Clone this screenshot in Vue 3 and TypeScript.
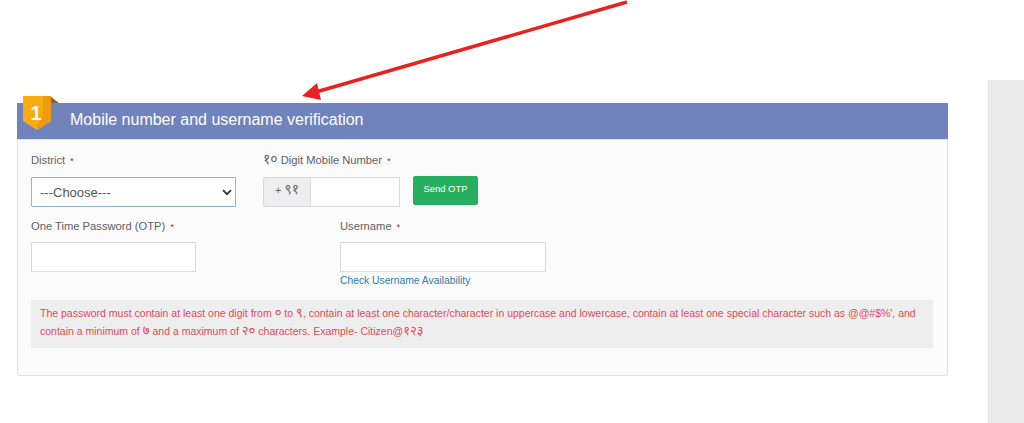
<script setup lang="ts">
</script>

<template>
  <div class="page">
    <main class="main">
      <section class="card">
        <header class="head">
          <svg class="ribbon" width="38" height="36" viewBox="0 0 38 36" aria-hidden="true">
            <path d="M27 0 L36 7 L27 7 Z" fill="#8a6d1f" />
            <path d="M0 0 H28 V25 L14 34 L0 25 Z" fill="#fcaa12" />
            <path d="M20 0 H28 V25 L14 34 V29 L20 20 Z" fill="#ef9a0e" />
          </svg>
          <span class="badge-num">1</span>
          <h2 class="title">Mobile number and username verification</h2>
        </header>
        <div class="body">
          <div class="row row-one">
            <div class="field district">
              <label class="label">District <i>*</i></label>
              <div class="select-wrap">
                <select class="select"><option>---Choose---</option></select>
                <svg class="chevron" width="10" height="7" viewBox="0 0 10 7" aria-hidden="true">
                  <path d="M1 1.2 L5 5.2 L9 1.2" fill="none" stroke="#333" stroke-width="1.8" />
                </svg>
              </div>
            </div>
            <div class="field mobile">
              <label class="label"><span class="dg">१०</span> Digit Mobile Number <i>*</i></label>
              <div class="group">
                <span class="addon">+ <span class="dg">९१</span></span>
                <input class="input group-input" type="text" />
              </div>
            </div>
            <button class="send" type="button">Send OTP</button>
          </div>
          <div class="row row-two">
            <div class="field otp">
              <label class="label">One Time Password (OTP) <i>*</i></label>
              <input class="input" type="text" />
            </div>
            <div class="field username">
              <label class="label">Username <i>*</i></label>
              <input class="input" type="text" />
              <a class="link">Check Username Availability</a>
            </div>
          </div>
          <div class="alert">
            <div class="line">The password must contain at least one digit from <span class="dg">०</span> to <span class="dg">९</span>, contain at least one character/character in uppercase and lowercase, contain at least one special character such as @@#$%', and</div>
            <div class="line">contain a minimum of <span class="dg">७</span> and a maximum of <span class="dg">२०</span> characters. Example- Citizen@<span class="dg">१२३</span></div>
          </div>
        </div>
      </section>
    </main>
    <aside class="side"></aside>
    <svg class="arrow" width="340" height="104" viewBox="0 0 340 104" aria-hidden="true">
      <line x1="327" y1="2" x2="16" y2="92" stroke="#e8221f" stroke-width="3.4" />
      <path d="M2 96 L17 83 L21 100 Z" fill="#e8221f" />
    </svg>
  </div>
</template>

<style>
html, body { margin: 0; background: #fff; }
</style>

<style scoped>
.page {
  position: relative;
  display: flex;
  width: 1024px;
  height: 423px;
  overflow: hidden;
  font-family: "Liberation Sans", "Noto Sans", sans-serif;
  color: #555;
}
.main { width: 948px; padding: 103px 0 0 17px; box-sizing: border-box; }
.side {
  width: 36px;
  margin: 80px 0 0 40px;
  background: #ebebeb;
  border-left: 1px solid #e2e2e2;
  box-sizing: border-box;
}
.card {
  width: 931px;
  height: 273px;
  box-sizing: border-box;
  background: #fbfbfb;
  border: 1px solid #e2e2e2;
  border-top: 0;
  border-radius: 3px;
}
.head {
  position: relative;
  height: 37px;
  margin: 0 -1px;
  background: #7083bd;
  border-bottom: 1px solid #dfe3ee;
  box-sizing: border-box;
  display: flex;
  align-items: center;
  padding: 0 0 3px 53px;
}
.ribbon { position: absolute; left: 6px; top: -7px; }
.badge-num {
  position: absolute;
  left: 6px;
  top: -3px;
  width: 26px;
  text-align: center;
  color: #fff;
  font-size: 20px;
  font-weight: 700;
  line-height: 26px;
}
.title { margin: 0; font-size: 16px; font-weight: 400; color: #fff; line-height: 30px; }
.body { padding: 0 13px 0 12px; }
.row { display: flex; }
.row-one { padding-top: 14px; align-items: flex-start; }
.row-two { margin-top: 13px; }
.field { display: flex; flex-direction: column; }
.label { font-size: 11.2px; line-height: 13px; margin-bottom: 10px; color: #5f5f5f; white-space: nowrap; }
.label i { color: #f00; font-style: normal; font-size: 9px; line-height: 0; margin-left: 2px; }
.dg { font-size: 1.25em; line-height: 0; }
.district { width: 205px; margin-left: 1px; margin-right: 27px; }
.select-wrap { position: relative; height: 30px; }
.select {
  appearance: none;
  display: block;
  height: 30px;
  width: 205px;
  box-sizing: border-box;
  padding: 0 20px 0 8px;
  background: #fff;
  border: 1px solid #8fb3d9;
  border-radius: 1px;
  outline: 0;
  font: 13px "Liberation Sans", sans-serif;
  color: #555;
}
.chevron { position: absolute; right: 4px; top: 12px; }
.mobile { width: 137px; margin-right: 13px; }
.group { display: flex; height: 30px; }
.addon {
  width: 47px;
  box-sizing: border-box;
  background: #eee;
  border: 1px solid #d9d9d9;
  border-right: 0;
  border-radius: 3px 0 0 3px;
  text-align: center;
  font-size: 11px;
  line-height: 24px;
  color: #666;
}
.input {
  height: 30px;
  box-sizing: border-box;
  background: #fff;
  border: 1px solid #d9d9d9;
  outline: 0;
  padding: 0 8px;
}
.group-input { flex: 1; min-width: 0; width: 90px; }
.send {
  margin-top: 22px;
  width: 65px;
  height: 29px;
  padding: 0 0 5px;
  background: #27ae60;
  border: 1px solid #27ae60;
  border-radius: 2px;
  color: #fff;
  font: 9.4px "Liberation Sans", sans-serif;
}
.row-two .label { margin-bottom: 9px; }
.otp { width: 165px; margin-left: 1px; margin-right: 144px; }
.otp .input { width: 165px; }
.username { width: 206px; }
.username .input { width: 206px; }
.link { margin-top: 2px; font-size: 10.3px; line-height: 13px; color: #2a7ea8; white-space: nowrap; }
.alert {
  width: 902px;
  height: 48px;
  box-sizing: border-box;
  margin: 13px 0 0 1px;
  padding: 4px 9px;
  background: #eee;
  border-radius: 2px;
  color: #e04a55;
  font-size: 10.5px;
  line-height: 18px;
}
.line { white-space: nowrap; }
.arrow { position: absolute; left: 300px; top: 0; }
</style>
